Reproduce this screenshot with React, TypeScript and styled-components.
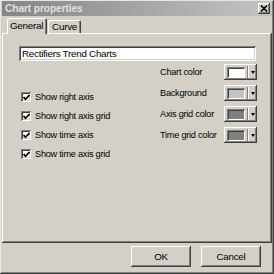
import styled, { createGlobalStyle } from "styled-components";

const GlobalStyle = createGlobalStyle`
  html, body {
    margin: 0;
    padding: 0;
    background: #d4d0c8;
  }
  * {
    box-sizing: border-box;
  }
`;

const raised = `
  box-shadow: inset -1px -1px #404040, inset 1px 1px #ffffff,
    inset -2px -2px #808080, inset 2px 2px #d4d0c8;
`;

const sunken = `
  box-shadow: inset 1px 1px #808080, inset -1px -1px #ffffff,
    inset 2px 2px #404040, inset -2px -2px #d4d0c8;
`;

const Window = styled.div`
  width: 274px;
  height: 274px;
  padding: 1px 2px 2px 2px;
  background: #d4d0c8;
  display: flex;
  flex-direction: column;
  font-family: "Liberation Sans", Arial, sans-serif;
  font-size: 9.2px;
  letter-spacing: -0.25px;
  color: #000;
  box-shadow: inset -1px -1px #404040, inset 1px 1px #e8e6e0,
    inset -2px -2px #808080;
`;

const TitleBar = styled.div`
  height: 15px;
  display: flex;
  align-items: center;
  justify-content: space-between;
  padding: 0 2px 0 3px;
  background: linear-gradient(to right, #858585, #c4c4c4);
`;

const Title = styled.span`
  font-weight: bold;
  font-size: 10.2px;
  letter-spacing: -0.1px;
  color: #e0e0e0;
`;

const CloseButton = styled.div`
  width: 12px;
  height: 11px;
  background: #d4d0c8;
  display: flex;
  align-items: center;
  justify-content: center;
  box-shadow: inset -1px -1px #404040, inset 1px 1px #ffffff,
    inset -2px -2px #808080;
`;

const TabRow = styled.div`
  height: 17px;
  display: flex;
  align-items: flex-end;
  padding-left: 5px;
`;

const Tab = styled.div<{ $active?: boolean }>`
  position: relative;
  z-index: 1;
  height: ${(p) => (p.$active ? 16 : 13)}px;
  margin-bottom: ${(p) => (p.$active ? -1 : 0)}px;
  padding: ${(p) => (p.$active ? "2px 4px 0 3px" : "1px 4px 0 4px")};
  margin-right: ${(p) => (p.$active ? 1 : 0)}px;
  background: #d4d0c8;
  border-radius: 2px 2px 0 0;
  font-size: 9.8px;
  box-shadow: inset 1px 1px #ffffff, inset -1px 0 #404040,
    inset -2px 0 #808080;
`;

const Panel = styled.div`
  flex: 1;
  padding: 13px 15px 0 17px;
  background: #d4d0c8;
  ${raised}
`;

const TextInput = styled.div`
  height: 15px;
  width: 237px;
  padding: 2px 3px 0 3px;
  background: #ffffff;
  font-size: 9.8px;
  line-height: 12px;
  ${sunken}
`;

const Columns = styled.div`
  display: flex;
  justify-content: space-between;
`;

const CheckList = styled.div`
  display: flex;
  flex-direction: column;
  gap: 3px;
  padding-top: 28px;
  padding-left: 2px;
`;

const CheckRow = styled.label`
  height: 16px;
  display: flex;
  align-items: center;
  gap: 4px;
  white-space: nowrap;
`;

const CheckBox = styled.span`
  width: 10px;
  height: 10px;
  background: #ffffff;
  display: flex;
  align-items: center;
  justify-content: center;
  ${sunken}
`;

const ColorList = styled.div`
  display: flex;
  flex-direction: column;
  gap: 5px;
  padding-top: 3px;
`;

const ColorRow = styled.div`
  height: 16px;
  display: grid;
  grid-template-columns: 64px 33px;
  align-items: center;
  white-space: nowrap;
`;

const ColorButton = styled.div`
  width: 33px;
  height: 16px;
  display: flex;
  align-items: center;
  padding: 0 0 0 3px;
  background: #d4d0c8;
  ${raised}
`;

const Swatch = styled.span<{ $color: string }>`
  width: 18px;
  height: 11px;
  background: ${(p) => p.$color};
  box-shadow: inset 1px 1px #808080, inset -1px -1px #ffffff,
    inset 2px 2px #404040;
`;

const Divider = styled.span`
  width: 2px;
  height: 12px;
  margin-left: 2px;
  border-left: 1px solid #808080;
  border-right: 1px solid #ffffff;
`;

const Arrow = styled.span`
  margin-left: 2px;
  width: 0;
  height: 0;
  border-left: 2.5px solid transparent;
  border-right: 2.5px solid transparent;
  border-top: 3px solid #000;
`;

const Footer = styled.div`
  height: 29px;
  display: flex;
  justify-content: flex-end;
  gap: 10px;
  padding: 3px 11px 0 0;
`;

const Button = styled.div`
  width: 60px;
  height: 21px;
  display: flex;
  align-items: center;
  justify-content: center;
  font-size: 9.8px;
  background: #d4d0c8;
  ${raised}
`;

const checks = [
  "Show right axis",
  "Show right axis grid",
  "Show time axis",
  "Show time axis grid",
];

const colors = [
  { label: "Chart color", color: "#ffffff" },
  { label: "Background", color: "#c4c4c4" },
  { label: "Axis grid color", color: "#808080" },
  { label: "Time grid color", color: "#808080" },
];

export default function App() {
  return (
    <>
      <GlobalStyle />
      <Window>
        <TitleBar>
          <Title>Chart properties</Title>
          <CloseButton>
            <svg width="8" height="7" viewBox="0 0 8 7">
              <path d="M1 0.5 L7 6.5 M7 0.5 L1 6.5" stroke="#000" strokeWidth="1.6" />
            </svg>
          </CloseButton>
        </TitleBar>
        <TabRow>
          <Tab $active>General</Tab>
          <Tab>Curve</Tab>
        </TabRow>
        <Panel>
          <TextInput>Rectifiers Trend Charts</TextInput>
          <Columns>
            <CheckList>
              {checks.map((c) => (
                <CheckRow key={c}>
                  <CheckBox>
                    <svg width="7" height="7" viewBox="0 0 7 7">
                      <path d="M0.5 3 L2.5 5.3 L6.5 1" stroke="#000" strokeWidth="1.7" fill="none" />
                    </svg>
                  </CheckBox>
                  {c}
                </CheckRow>
              ))}
            </CheckList>
            <ColorList>
              {colors.map((c) => (
                <ColorRow key={c.label}>
                  <span>{c.label}</span>
                  <ColorButton>
                    <Swatch $color={c.color} />
                    <Divider />
                    <Arrow />
                  </ColorButton>
                </ColorRow>
              ))}
            </ColorList>
          </Columns>
        </Panel>
        <Footer>
          <Button>OK</Button>
          <Button>Cancel</Button>
        </Footer>
      </Window>
    </>
  );
}
